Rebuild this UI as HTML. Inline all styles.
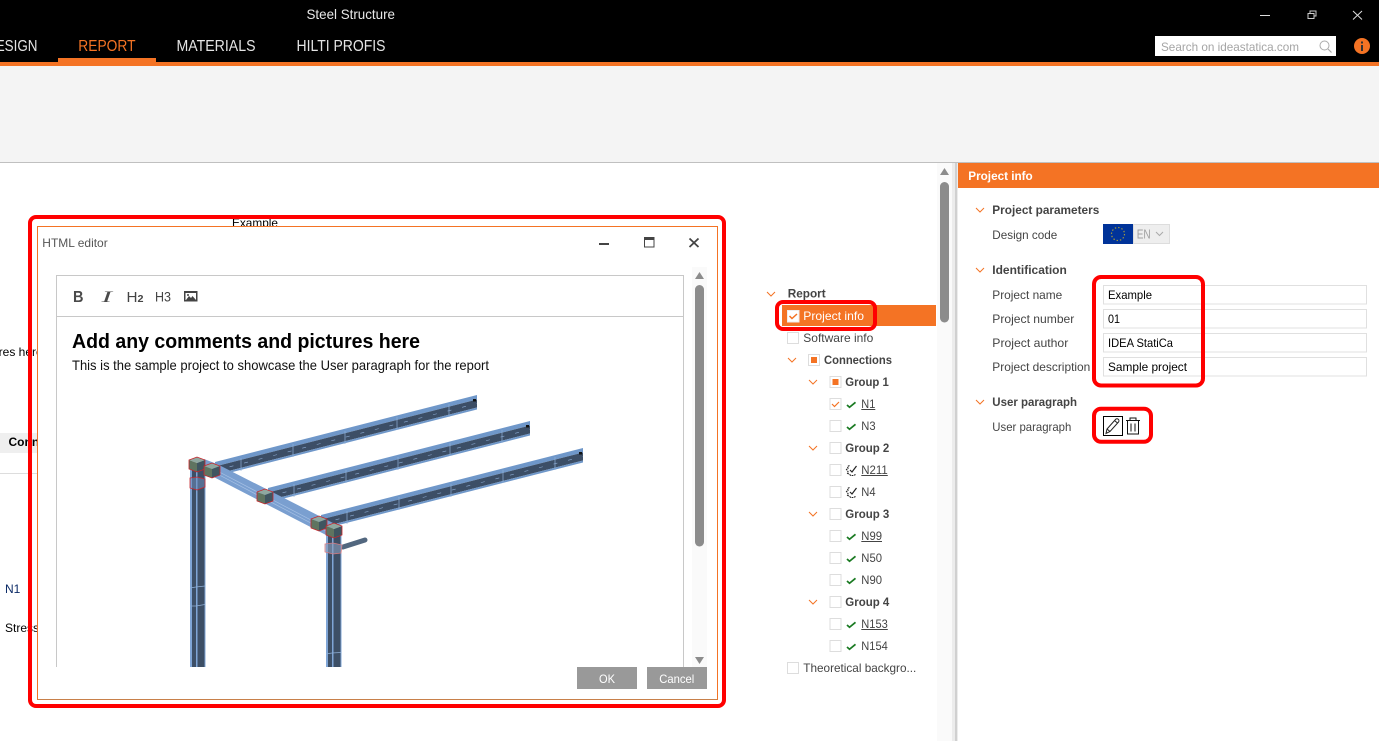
<!DOCTYPE html>
<html lang="en">
<head>
<meta charset="utf-8">
<title>Steel Structure</title>
<style>
html,body{margin:0;padding:0;width:1379px;height:741px;overflow:hidden;background:#fff}
svg{display:block;position:absolute;left:0;top:0}
text{font-family:"Liberation Sans",Arial,sans-serif;font-size:12px;fill:#444}
.b{font-weight:bold}
.ink{fill:#000}
.n{fill:#fff;stroke:#ddd;stroke-width:1}
.chev{fill:none;stroke:#f47324;stroke-width:1}
.ok{fill:none;stroke:#1a7a22;stroke-width:1.7}
.u{stroke:#444;stroke-width:1}
.red{fill:none;stroke:#f00;stroke-width:4}
.inp{fill:#fff;stroke:#e0e0e0;stroke-width:1}
</style>
</head>
<body>
<svg width="1379" height="741" viewBox="0 0 1379 741" xmlns="http://www.w3.org/2000/svg">
<defs>
  <clipPath id="ed"><rect x="57" y="317" width="627" height="350"/></clipPath>
  <g id="beam">
    <polygon points="0,0 262,-67 262,-62.5 0,4.500" fill="#6f97c9"/>
    <polygon points="0,4.500 262,-62.5 262,-54.5 0,12.500" fill="#3c4e66"/>
    <polygon points="0,12.500 262,-54.5 262,-52.5 0,14.500" fill="#6f97c9"/>
    <path d="M0,8.500 L262,-58.500" stroke="#8aa8cf" stroke-width=".6" stroke-dasharray="4 11" fill="none"/>
    <path d="M26,-4 v13 M78,-18 v13 M130,-31 v13 M182,-45 v13 M234,-58 v13" stroke="#8fb0d8" stroke-width=".7"/>
    <rect x="258" y="-63" width="3" height="2.500" fill="#111"/>
  </g>
  <g id="node">
    <polygon points="0,3 8,0 16,3 8,6" fill="#8fa8a0"/>
    <polygon points="0,3 8,6 8,15 0,12" fill="#5f7460"/>
    <polygon points="8,6 16,3 16,12 8,15" fill="#3f5560"/>
    <polygon points="0,3 8,0 16,3 16,12 8,15 0,12" fill="none" stroke="#c8262c" stroke-width=".8"/>
  </g>
</defs>

<!-- title bar -->
<rect x="0" y="0" width="1379" height="62" fill="#000"/>
<rect x="0" y="62" width="1379" height="4" fill="#f47324"/>
<rect x="58" y="58" width="98" height="5" fill="#f47324"/>
<text x="306.500" y="19" style="font-size:14px;fill:#e8e8e8" textLength="88.500" lengthAdjust="spacingAndGlyphs">Steel Structure</text>
<text x="-14" y="51" style="font-size:15.500px;fill:#e4e4e4" textLength="51.500" lengthAdjust="spacingAndGlyphs">DESIGN</text>
<text x="78.300" y="51" style="font-size:15.500px;fill:#f47324" textLength="57.200" lengthAdjust="spacingAndGlyphs">REPORT</text>
<text x="176.500" y="51" style="font-size:15.500px;fill:#e4e4e4" textLength="79" lengthAdjust="spacingAndGlyphs">MATERIALS</text>
<text x="296.500" y="51" style="font-size:15.500px;fill:#e4e4e4" textLength="89" lengthAdjust="spacingAndGlyphs">HILTI PROFIS</text>
<path d="M1260,15.500h10" stroke="#ddd" stroke-width="1"/>
<path d="M1308,13.500h6v5h-6z M1310,13.500v-2.500h6v5h-2" fill="none" stroke="#ccc" stroke-width="1"/>
<path d="M1353,11l9,8.500M1362,11l-9,8.500" stroke="#ddd" stroke-width="1"/>
<rect x="1155" y="36" width="181" height="20" fill="#fff"/>
<text x="1161" y="51" style="fill:#a5a5a5" textLength="138" lengthAdjust="spacingAndGlyphs">Search on ideastatica.com</text>
<circle cx="1324.500" cy="45.500" r="4.500" fill="none" stroke="#aaa" stroke-width="1"/>
<path d="M1328,49l3.500,3.500" stroke="#aaa" stroke-width="1.200"/>
<circle cx="1362" cy="46" r="8" fill="#f47324"/>
<rect x="1361" y="45" width="2" height="6" fill="#333"/>
<rect x="1361" y="41.500" width="2" height="2" fill="#333"/>

<!-- ribbon -->
<rect x="0" y="66" width="1379" height="96" fill="#f4f4f4"/>
<rect x="0" y="162" width="1379" height="1" fill="#c0c0c0"/>

<!-- document behind dialog -->
<text x="232" y="227" class="ink" textLength="46" lengthAdjust="spacingAndGlyphs">Example</text>
<text x="-28" y="356" class="ink">Pictures here</text>
<rect x="0" y="433" width="37" height="20" fill="#efefef"/>
<rect x="0" y="473" width="37" height="1" fill="#ddd"/>
<text x="8.500" y="446" class="b ink">Connection</text>
<text x="5" y="593" style="fill:#0b2a66">N1</text>
<text x="5" y="632" class="ink">Stress</text>

<!-- main scrollbar -->
<rect x="937" y="163" width="15" height="578" fill="#fafafa"/>
<polygon points="944.500,168 949,175 940,175" fill="#8c8c8c"/>
<path d="M940,186.500a4.500,4.500 0 0 1 9,0V318a4.500,4.500 0 0 1 -9,0z" fill="#8c8c8c"/>
<rect x="952" y="163" width="6" height="578" fill="#ececec"/>
<rect x="955" y="163" width="2" height="578" fill="#d0d0d0"/>

<!-- tree -->
<path class="chev" d="M767,292l4,4l4,-4"/>
<text x="787.700" y="297.500" class="b" textLength="38" lengthAdjust="spacingAndGlyphs">Report</text>
<rect x="782" y="305" width="154" height="21" fill="#f47324"/>
<rect x="787.500" y="310.500" width="11.500" height="11.500" fill="#fff" stroke="#eee"/>
<path d="M789.500,316l2.500,2.500l5,-4.500" fill="none" stroke="#f47324" stroke-width="1.500"/>
<text x="803.300" y="320" style="fill:#fff" textLength="60.700" lengthAdjust="spacingAndGlyphs">Project info</text>
<rect class="n" x="787.500" y="332.500" width="11" height="11"/>
<text x="803.300" y="342" textLength="70" lengthAdjust="spacingAndGlyphs">Software info</text>

<path class="chev" d="M788,358l4,4l4,-4"/>
<rect class="n" x="808.500" y="354.500" width="11" height="11"/>
<rect x="811" y="357" width="6" height="6" fill="#f47324"/>
<text x="824" y="364" class="b" textLength="68" lengthAdjust="spacingAndGlyphs">Connections</text>

<path class="chev" d="M809,380l4,4l4,-4"/>
<rect class="n" x="830" y="376.500" width="11" height="11"/>
<rect x="832.500" y="379" width="6" height="6" fill="#f47324"/>
<text x="845.300" y="386" class="b" textLength="43.500" lengthAdjust="spacingAndGlyphs">Group 1</text>

<rect class="n" x="830" y="398.500" width="11" height="11"/>
<path d="M832,404l2.500,2.500l4.500,-4.500" fill="none" stroke="#f47324" stroke-width="1.200"/>
<path class="ok" d="M847,405l2.500,2.300l6,-5"/>
<text x="861.300" y="408" textLength="14" lengthAdjust="spacingAndGlyphs">N1</text>
<path class="u" d="M861.300,409.500h14"/>

<rect class="n" x="830" y="420.500" width="11" height="11"/>
<path class="ok" d="M847,427l2.500,2.300l6,-5"/>
<text x="861.300" y="430" textLength="14.300" lengthAdjust="spacingAndGlyphs">N3</text>

<path class="chev" d="M809,446l4,4l4,-4"/>
<rect class="n" x="830" y="442.500" width="11" height="11"/>
<text x="845.300" y="452" class="b" textLength="44" lengthAdjust="spacingAndGlyphs">Group 2</text>

<rect class="n" x="830" y="464.500" width="11" height="11"/>
<path d="M849.500,465.500l-2,1l.5,2l-1.500,1l1.500,2l-.5,2l2,.5l1,1.500h3l2,-1" fill="none" stroke="#222" stroke-width="1.100" stroke-dasharray="1.800 .8"/>
<path d="M850,470l2,2l4.500,-6" fill="none" stroke="#222" stroke-width="1.200"/>
<text x="861.300" y="474" textLength="26.500" lengthAdjust="spacingAndGlyphs">N211</text>
<path class="u" d="M861.300,475.500h26.500"/>

<rect class="n" x="830" y="486.500" width="11" height="11"/>
<path d="M849.500,487.500l-2,1l.5,2l-1.500,1l1.500,2l-.5,2l2,.5l1,1.500h3l2,-1" fill="none" stroke="#222" stroke-width="1.100" stroke-dasharray="1.800 .8"/>
<path d="M850,492l2,2l4.500,-6" fill="none" stroke="#222" stroke-width="1.200"/>
<text x="861.300" y="496" textLength="14.300" lengthAdjust="spacingAndGlyphs">N4</text>

<path class="chev" d="M809,512l4,4l4,-4"/>
<rect class="n" x="830" y="508.500" width="11" height="11"/>
<text x="845.300" y="518" class="b" textLength="44" lengthAdjust="spacingAndGlyphs">Group 3</text>

<rect class="n" x="830" y="530.500" width="11" height="11"/>
<path class="ok" d="M847,537l2.500,2.300l6,-5"/>
<text x="861.300" y="540" textLength="20.700" lengthAdjust="spacingAndGlyphs">N99</text>
<path class="u" d="M861.300,541.500h20.700"/>

<rect class="n" x="830" y="552.500" width="11" height="11"/>
<path class="ok" d="M847,559l2.500,2.300l6,-5"/>
<text x="861.300" y="562" textLength="20.700" lengthAdjust="spacingAndGlyphs">N50</text>

<rect class="n" x="830" y="574.500" width="11" height="11"/>
<path class="ok" d="M847,581l2.500,2.300l6,-5"/>
<text x="861.300" y="584" textLength="20.700" lengthAdjust="spacingAndGlyphs">N90</text>

<path class="chev" d="M809,600l4,4l4,-4"/>
<rect class="n" x="830" y="596.500" width="11" height="11"/>
<text x="845.300" y="606" class="b" textLength="44" lengthAdjust="spacingAndGlyphs">Group 4</text>

<rect class="n" x="830" y="618.500" width="11" height="11"/>
<path class="ok" d="M847,625l2.500,2.300l6,-5"/>
<text x="861.300" y="628" textLength="26.500" lengthAdjust="spacingAndGlyphs">N153</text>
<path class="u" d="M861.300,629.500h26.500"/>

<rect class="n" x="830" y="640.500" width="11" height="11"/>
<path class="ok" d="M847,647l2.500,2.300l6,-5"/>
<text x="861.300" y="650" textLength="26.500" lengthAdjust="spacingAndGlyphs">N154</text>

<rect class="n" x="787.500" y="662.500" width="11" height="11"/>
<text x="803.300" y="672" textLength="113" lengthAdjust="spacingAndGlyphs">Theoretical backgro...</text>

<rect class="red" x="777" y="302" width="98" height="27" rx="6"/>

<!-- right panel -->
<rect x="958" y="163" width="421" height="25" fill="#f47324"/>
<text x="968.300" y="180" class="b" style="fill:#fff" textLength="64.400" lengthAdjust="spacingAndGlyphs">Project info</text>

<path class="chev" d="M976,208l4,4l4,-4"/>
<text x="992.300" y="214" class="b" textLength="107" lengthAdjust="spacingAndGlyphs">Project parameters</text>
<text x="992.300" y="239" textLength="65" lengthAdjust="spacingAndGlyphs">Design code</text>
<rect x="1133.500" y="224.500" width="36" height="19" fill="#eee" stroke="#ddd"/>
<rect x="1103" y="224" width="30" height="20" fill="#003399"/>
<circle cx="1118" cy="234" r="6.500" fill="none" stroke="#a09a40" stroke-width="1.200" stroke-dasharray="1.400 2"/>
<text x="1136.700" y="238.500" style="font-size:13px;fill:#a0a0a0" textLength="14" lengthAdjust="spacingAndGlyphs">EN</text>
<path d="M1156,232l3.500,3.500l3.500,-3.500" fill="none" stroke="#aaa"/>

<path class="chev" d="M976,268l4,4l4,-4"/>
<text x="992.300" y="274" class="b" textLength="74.500" lengthAdjust="spacingAndGlyphs">Identification</text>

<text x="992.300" y="299" textLength="70" lengthAdjust="spacingAndGlyphs">Project name</text>
<rect class="inp" x="1103.500" y="285.500" width="263" height="18.500"/>
<text x="1108" y="299" class="ink" textLength="44" lengthAdjust="spacingAndGlyphs">Example</text>

<text x="992.300" y="323" textLength="82" lengthAdjust="spacingAndGlyphs">Project number</text>
<rect class="inp" x="1103.500" y="309.500" width="263" height="18.500"/>
<text x="1108" y="323" class="ink" textLength="12" lengthAdjust="spacingAndGlyphs">01</text>

<text x="992.300" y="347" textLength="76" lengthAdjust="spacingAndGlyphs">Project author</text>
<rect class="inp" x="1103.500" y="333.500" width="263" height="18.500"/>
<text x="1108" y="347" class="ink" textLength="65" lengthAdjust="spacingAndGlyphs">IDEA StatiCa</text>

<text x="992.300" y="371" textLength="98" lengthAdjust="spacingAndGlyphs">Project description</text>
<rect class="inp" x="1103.500" y="357.500" width="263" height="18.500"/>
<text x="1108" y="371" class="ink" textLength="79" lengthAdjust="spacingAndGlyphs">Sample project</text>

<path class="chev" d="M976,400l4,4l4,-4"/>
<text x="992.300" y="406" class="b" textLength="84.700" lengthAdjust="spacingAndGlyphs">User paragraph</text>
<text x="992.300" y="431" textLength="79" lengthAdjust="spacingAndGlyphs">User paragraph</text>

<rect x="1103.500" y="416.500" width="19" height="19" fill="#fff" stroke="#000"/>
<path d="M1106,433.500l1,-4.500l8.500,-9.500a1.800,1.800 0 0 1 3,2.500l-8.500,9.500z M1107,429l3,2.500 M1114.500,420.500l3,2.500" fill="none" stroke="#222" stroke-width="1"/>
<path d="M1126,420.500h14 M1130,420.500v-2.500h6v2.500 M1127.500,420.500v13.500h11v-13.500 M1131,423.500v8 M1135,423.500v8" fill="none" stroke="#111" stroke-width="1"/>

<rect class="red" x="1094" y="277" width="109" height="108.500" rx="7"/>
<rect class="red" x="1094" y="408.700" width="57" height="33" rx="7"/>

<!-- dialog -->
<rect x="37.500" y="226.500" width="680" height="473" fill="#fff" stroke="#f47324" stroke-width="1"/>
<path d="M37.500,699.500H717.500" stroke="#c8804a" stroke-width="1"/>
<text x="42.300" y="247" style="fill:#555" textLength="65.400" lengthAdjust="spacingAndGlyphs">HTML editor</text>
<rect x="599" y="243" width="10" height="2" fill="#444"/>
<rect x="644.500" y="237.500" width="9.500" height="9.500" fill="#fff" stroke="#444"/>
<rect x="644" y="237" width="10.500" height="3" fill="#444"/>
<path d="M689.500,238.500l9,8.500M698.500,238.500l-9,8.500" stroke="#444" stroke-width="1.800"/>

<!-- editor -->
<path d="M56.500,667V275.500H683.500V667" fill="none" stroke="#c8c8c8" stroke-width="1"/>
<rect x="57" y="316" width="626" height="1" fill="#c8c8c8"/>
<text x="73" y="302" class="b" style="font-size:15.500px;fill:#4a4a4a" textLength="10.500" lengthAdjust="spacingAndGlyphs">B</text>
<text x="101.500" y="302" style="font-size:16px;font-family:'Liberation Serif',serif;font-style:italic;fill:#4a4a4a" textLength="10.500" lengthAdjust="spacingAndGlyphs">I</text>
<text x="126.500" y="302" style="font-size:15px" textLength="11" lengthAdjust="spacingAndGlyphs">H</text>
<text x="137.500" y="302" class="b" style="font-size:10.500px" textLength="6" lengthAdjust="spacingAndGlyphs">2</text>
<text x="155" y="301.500" style="font-size:14px;" textLength="16" lengthAdjust="spacingAndGlyphs">H3</text>
<rect x="184" y="291" width="13.500" height="10.500" fill="#444"/>
<rect x="185.500" y="293" width="10.500" height="7" fill="#fff"/>
<path d="M186,300l3,-4l2,2l1.500,-2l3.500,4z" fill="#444"/>
<circle cx="188" cy="295" r="1" fill="#444"/>

<text x="72" y="348" class="b ink" style="font-size:20px" textLength="348" lengthAdjust="spacingAndGlyphs">Add any comments and pictures here</text>
<text x="72" y="370" class="ink" style="font-size:14px;fill:#111" textLength="417" lengthAdjust="spacingAndGlyphs">This is the sample project to showcase the User paragraph for the report</text>

<!-- 3D model -->
<g clip-path="url(#ed)">
  <use href="#beam" x="215" y="462"/>
  <use href="#beam" x="268" y="488"/>
  <use href="#beam" x="321" y="515"/>
  <path d="M343,547L365,540" stroke="#52677f" stroke-width="5" stroke-linecap="round"/>
  <polygon points="204,459 217,464 337,525 326,535 204,472" fill="#7a9fd0"/>
  <path d="M206,465L330,530 M206,468L328,532" stroke="#a5c0e4" stroke-width=".7"/>
  <rect x="190" y="470" width="15" height="197" fill="#3d4f66"/>
  <rect x="190" y="470" width="2" height="197" fill="#7fa5d6"/>
  <rect x="196" y="470" width="1.500" height="197" fill="#7fa5d6"/>
  <rect x="204.500" y="470" width="1" height="197" fill="#7fa5d6"/>
  <path d="M190,588l6,-1l9,-1 M190,606l6,0l9,-1.500" stroke="#8fb0d8" stroke-width=".8" fill="none"/>
  <rect x="326" y="530" width="15" height="137" fill="#3d4f66"/>
  <rect x="326" y="530" width="2" height="137" fill="#7fa5d6"/>
  <rect x="332" y="530" width="1.500" height="137" fill="#7fa5d6"/>
  <rect x="340.500" y="530" width="1" height="137" fill="#7fa5d6"/>
  <path d="M326,654l6,-1l9,-.5" stroke="#8fb0d8" stroke-width=".8" fill="none"/>
  <use href="#node" x="189" y="457"/>
  <use href="#node" x="204" y="463"/>
  <use href="#node" x="257" y="489"/>
  <use href="#node" x="311" y="516"/>
  <use href="#node" x="326" y="523"/>
  <polygon points="190,478 197,477 205,479 205,487 197,490 190,488" fill="#6f8fc0" fill-opacity=".5" stroke="#c8262c" stroke-width=".8"/>
  <polygon points="325,544 333,543 342,545 341,553 333,554 325,552" fill="#8a9cba" fill-opacity=".6" stroke="#d87a80" stroke-width=".8"/>
</g>

<!-- dialog scrollbar -->
<rect x="692" y="267" width="15" height="400" fill="#fafafa"/>
<polygon points="699.500,272 704,279 695,279" fill="#8c8c8c"/>
<path d="M695,289.500a4.500,4.500 0 0 1 9,0V542a4.500,4.500 0 0 1 -9,0z" fill="#8c8c8c"/>
<polygon points="695,657 704,657 699.500,664" fill="#8c8c8c"/>

<!-- buttons -->
<rect x="577" y="667" width="60" height="22" fill="#999"/>
<rect x="647" y="667" width="60" height="22" fill="#999"/>
<text x="599" y="683" style="fill:#fff" textLength="16" lengthAdjust="spacingAndGlyphs">OK</text>
<text x="659.300" y="683" style="fill:#fff" textLength="35" lengthAdjust="spacingAndGlyphs">Cancel</text>

<rect class="red" x="30" y="217" width="694" height="489" rx="6"/>
</svg>
</body>
</html>
